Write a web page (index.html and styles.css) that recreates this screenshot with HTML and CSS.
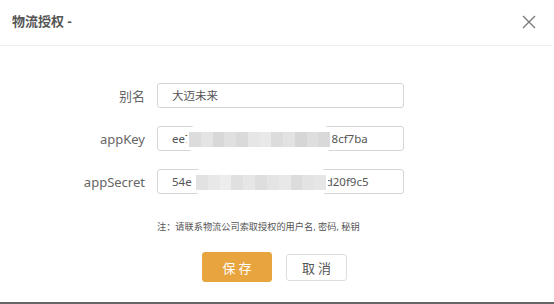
FILE: index.html
```html
<!DOCTYPE html>
<html lang="zh">
<head>
<meta charset="utf-8">
<link rel="stylesheet" href="styles.css">
</head>
<body>
<div class="dialog">
  <div class="header">
    <div class="title">物流授权 -</div>
    <svg class="close" width="14" height="14" viewBox="0 0 14 14"><path d="M1 1L13 13M13 1L1 13" stroke="#777" stroke-width="1.3" fill="none"/></svg>
  </div>
  <div class="body">
    <div class="form">
      <div class="label">别名</div>
      <div class="input">大迈未来</div>
      <div class="label">appKey</div>
      <div class="input">ee7<span class="gap g1"></span>8cf7ba
        <div class="mosaic m1">
          <i style="background:#dcdcdc"></i><i style="background:#e4e4e4"></i><i style="background:#d8d8d8"></i><i style="background:#e0e0e0"></i><i style="background:#dadada"></i><i style="background:#e6e6e6"></i><i style="background:#e9e9e9"></i><i style="background:#dcdcdc"></i><i style="background:#e2e2e2"></i><i style="background:#d6d6d6"></i><i style="background:#dedede"></i><i style="background:#d9d9d9"></i>
        </div>
      </div>
      <div class="label">appSecret</div>
      <div class="input">54e<span class="gap g2"></span>d20f9c5
        <div class="mosaic m2">
          <i style="background:#e2e2e2"></i><i style="background:#e8e8e8"></i><i style="background:#ededed"></i><i style="background:#e0e0e0"></i><i style="background:#e6e6e6"></i><i style="background:#dedede"></i><i style="background:#e4e4e4"></i><i style="background:#e8e8e8"></i><i style="background:#dcdcdc"></i><i style="background:#e3e3e3"></i><i style="background:#e6e6e6"></i>
        </div>
      </div>
    </div>
    <div class="note">注：请联系物流公司索取授权的用户名, 密码, 秘钥</div>
    <div class="actions">
      <button class="btn primary">保存</button>
      <button class="btn">取消</button>
    </div>
  </div>
</div>
</body>
</html>
```
FILE: styles.css
```css
* { box-sizing: border-box; }
html, body { margin: 0; padding: 0; background: #fff; }
body {
  width: 554px;
  height: 304px;
  overflow: hidden;
  font-family: "Noto Sans", "Noto Sans CJK SC", sans-serif;
}
.dialog {
  height: 304px;
  border-bottom: 2px solid #666;
  display: flex;
  flex-direction: column;
}
.header {
  height: 46px;
  border-bottom: 1px solid #eeeeee;
  margin-right: 2px;
  display: flex;
  align-items: center;
  justify-content: space-between;
  padding: 0 16px 4px 12px;
}
.title {
  font-size: 13px;
  font-weight: bold;
  color: #555;
  line-height: 16px;
}
.close { display: block; margin-top: 2px; }
.body {
  padding-top: 37px;
}
.form {
  display: grid;
  grid-template-columns: 145px 247px;
  column-gap: 12px;
  row-gap: 18px;
  align-items: center;
}
.label {
  text-align: right;
  font-size: 13px;
  color: #666;
}
.input {
  position: relative;
  height: 25px;
  border: 1px solid #d6d6d6;
  border-radius: 3px;
  padding: 0 14px;
  font-size: 11.5px;
  color: #555;
  line-height: 23px;
  display: flex;
  align-items: center;
  white-space: nowrap;
}
.gap { display: inline-block; flex: none; }
.g1 { width: 140px; }
.g2 { width: 134px; }
.mosaic {
  position: absolute;
  background: #fff;
  display: flex;
  align-items: center;
  padding: 0 2px;
}
.mosaic i {
  display: block;
  width: 12px;
  height: 15px;
}
.m1 {
  left: 29px;
  top: -3px;
  width: 145px;
  height: 31px;
  border-radius: 14px;
}
.m2 {
  left: 36px;
  top: -4px;
  width: 134px;
  height: 32px;
  border-radius: 14px;
}
.note {
  margin: 26px 0 0 157px;
  font-size: 9.2px;
  color: #555;
  line-height: 14px;
}
.actions {
  display: flex;
  align-items: center;
  gap: 14px;
  padding-left: 202px;
  margin-top: 18px;
}
.btn {
  font-family: "Noto Sans CJK SC", sans-serif;
  font-size: 13px;
  letter-spacing: 3px;
  text-indent: 3px;
  height: 27px;
  width: 61px;
  border: 1px solid #dddddd;
  background: #fff;
  color: #555;
  border-radius: 3px;
  padding: 0;
  line-height: 25px;
}
.btn.primary {
  width: 70px;
  height: 30px;
  background: #e8a43e;
  border-color: #e8a43e;
  color: #fff;
}
```
